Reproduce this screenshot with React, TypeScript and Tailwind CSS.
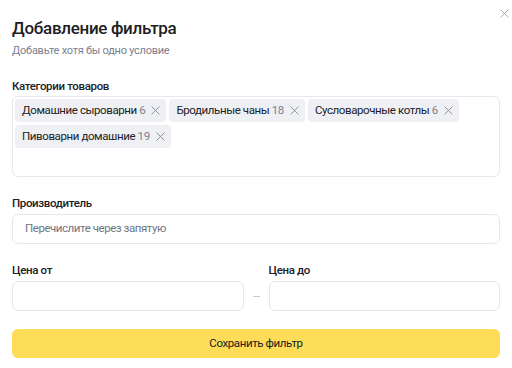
import React from 'react';

const categories = [
  { name: 'Домашние сыроварни', count: 6 },
  { name: 'Бродильные чаны', count: 18 },
  { name: 'Сусловарочные котлы', count: 6 },
  { name: 'Пивоварни домашние', count: 19 },
];

function Cross({ className = '' }: { className?: string }) {
  return (
    <svg viewBox="0 0 10 10" className={className} fill="none" stroke="currentColor" strokeWidth="1.1" strokeLinecap="round">
      <path d="M1 1l8 8M9 1l-8 8" />
    </svg>
  );
}

function Label({ children }: { children: React.ReactNode }) {
  return <div className="text-[11.5px] leading-4 font-medium tracking-[-0.35px] text-[#21201f]">{children}</div>;
}

export default function App() {
  return (
    <div className="relative w-[512px] h-[368px] bg-white px-3 pt-4 font-['Roboto','Noto_Sans',sans-serif] text-[#21201f]">
      <button className="absolute right-[3px] top-[9px] text-[#a3a8b3]">
        <Cross className="w-[9px] h-[9px]" />
      </button>

      {/* Header */}
      <h1 className="text-[17px] leading-6 font-medium tracking-[-0.3px]">Добавление фильтра</h1>
      <p className="mt-[3px] text-[11px] leading-4 tracking-[-0.25px] text-[#7b8190]">Добавьте хотя бы одно условие</p>

      {/* Categories */}
      <div className="mt-[19px]">
        <Label>Категории товаров</Label>
        <div className="mt-[2px] h-[81px] rounded-md border border-[#e6e8ec] p-[2px] flex flex-wrap content-start gap-[3px]">
          {categories.map((c) => (
            <div key={c.name} className="h-[23px] flex items-center gap-[6px] rounded-[4px] bg-[#eef0f4] pl-[7px] pr-[6px] text-[11.5px] tracking-[-0.4px]">
              <span>
                {c.name} <span className="text-[#7b8190]">{c.count}</span>
              </span>
              <Cross className="w-[9px] h-[9px] text-[#8c919c]" />
            </div>
          ))}
        </div>
      </div>

      {/* Manufacturer */}
      <div className="mt-[18px]">
        <Label>Производитель</Label>
        <div className="mt-[3px] h-[30px] rounded-md border border-[#e6e8ec] flex items-center px-3 text-[11.5px] tracking-[-0.45px] text-[#6f7582]">
          Перечислите через запятую
        </div>
      </div>

      {/* Price */}
      <div className="mt-[18px] flex items-end">
        <div className="flex-1">
          <Label>Цена от</Label>
          <div className="mt-[3px] h-[30px] rounded-md border border-[#e6e8ec]" />
        </div>
        <div className="w-[25px] h-[30px] flex items-center justify-center">
          <div className="w-[7px] h-px bg-[#c8ccd3]" />
        </div>
        <div className="flex-1">
          <Label>Цена до</Label>
          <div className="mt-[3px] h-[30px] rounded-md border border-[#e6e8ec]" />
        </div>
      </div>

      <button className="mt-[18px] w-full h-[29px] rounded-md bg-[#fddc57] text-[11.5px] tracking-[-0.4px] text-[#21201f]">
        Сохранить фильтр
      </button>
    </div>
  );
}
